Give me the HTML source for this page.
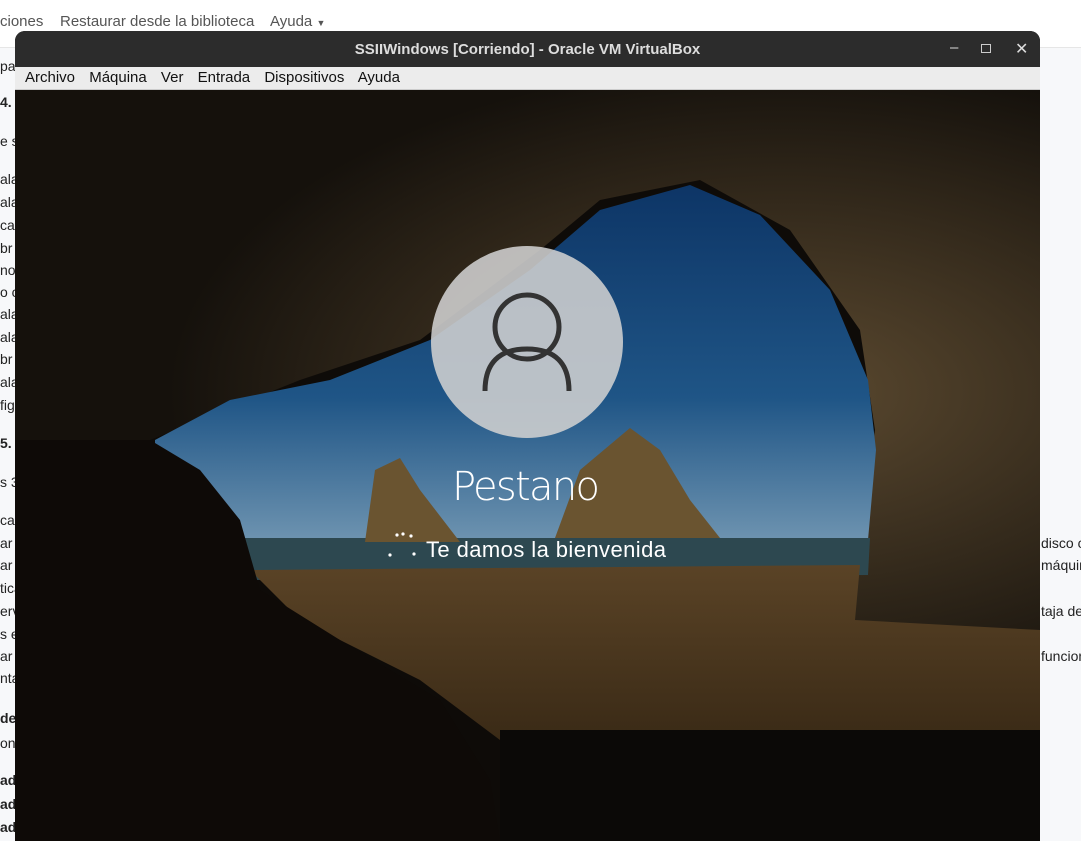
<!DOCTYPE html>
<html><head><meta charset="utf-8"><style>
*{margin:0;padding:0;box-sizing:border-box}
body{width:1081px;height:835px;overflow:hidden;background:#f7f8fa;font-family:"Liberation Sans",sans-serif;position:relative}
.top{position:absolute;left:0;top:0;width:1081px;height:48px;background:#fff;border-bottom:1px solid #e6e6e6}
.top span{position:absolute;top:13px;font-size:15px;color:#555;white-space:nowrap}
.lt{position:absolute;left:0;font-size:14px;color:#222;white-space:nowrap}
.rt{position:absolute;left:1041px;font-size:14px;color:#222;white-space:nowrap}
.win{position:absolute;left:15px;top:31px;width:1025px;height:810px;background:#000;border-radius:10px 10px 0 0;overflow:hidden}
.tb{height:36px;background:#2c2c2c;color:#ddd;font-weight:bold;font-size:15px;text-align:center;line-height:37px;position:relative}
.mb{height:23px;background:#ececec;border-bottom:1px solid #ccc;font-size:15px;color:#111;line-height:22px;padding-left:10px;white-space:nowrap}
.mb span{margin-right:10px}
</style></head><body>
<div class="top"><span style="left:0">ciones</span><span style="left:60px">Restaurar desde la biblioteca</span><span style="left:270px">Ayuda <small style="font-size:9px">▼</small></span></div>
<div class="lt" style="top:58px">pa</div>
<div class="lt" style="top:94px;font-weight:bold">4.</div>
<div class="lt" style="top:133px">e s</div>
<div class="lt" style="top:171px">ala</div><div class="lt" style="top:194px">ala</div><div class="lt" style="top:217px">car</div><div class="lt" style="top:240px">br</div><div class="lt" style="top:262px">nor</div><div class="lt" style="top:284px">o c</div><div class="lt" style="top:306px">ala</div><div class="lt" style="top:329px">ala</div><div class="lt" style="top:351px">br</div><div class="lt" style="top:374px">ala</div><div class="lt" style="top:397px">figu</div>
<div class="lt" style="top:435px;font-weight:bold">5.</div>
<div class="lt" style="top:474px">s 3</div>
<div class="lt" style="top:512px">car</div><div class="lt" style="top:535px">ar u</div><div class="lt" style="top:557px">ar</div><div class="lt" style="top:580px">tica</div><div class="lt" style="top:603px">erv</div><div class="lt" style="top:626px">s e</div><div class="lt" style="top:648px">ar u</div><div class="lt" style="top:670px">nta</div>
<div class="lt" style="top:710px;font-weight:bold">de</div>
<div class="lt" style="top:735px">ons</div>
<div class="lt" style="top:772px;font-weight:bold">ad</div><div class="lt" style="top:796px;font-weight:bold">ad</div><div class="lt" style="top:819px;font-weight:bold">ad</div>
<div class="rt" style="top:535px">disco c</div><div class="rt" style="top:557px">máquin</div><div class="rt" style="top:603px">taja de</div><div class="rt" style="top:648px">funcion</div>
<div class="win">
<div class="tb">SSIIWindows [Corriendo] - Oracle VM VirtualBox
<span style="position:absolute;left:935px;top:-2px;font-weight:normal">–</span>
<span style="position:absolute;left:966px;top:13px;width:10px;height:9px;border:1px solid #ccc"></span>
<span style="position:absolute;left:1000px;top:0;font-weight:normal;font-size:16px">✕</span></div>
<div class="mb"><span>Archivo</span> <span>Máquina</span> <span>Ver</span> <span>Entrada</span> <span>Dispositivos</span> <span>Ayuda</span></div>
<svg width="1025" height="751" viewBox="15 90 1025 751" style="display:block">
<defs>
<linearGradient id="sky" x1="0" y1="0" x2="0" y2="1"><stop offset="0" stop-color="#0d3566"/><stop offset="0.6" stop-color="#1f5586"/><stop offset="1" stop-color="#6d93b0"/></linearGradient>
<linearGradient id="sand" x1="0" y1="0" x2="0" y2="1"><stop offset="0" stop-color="#5a4326"/><stop offset="1" stop-color="#3a2a16"/></linearGradient>
<radialGradient id="rock" cx="0.75" cy="0.55" r="0.6"><stop offset="0" stop-color="#5c4a30"/><stop offset="1" stop-color="#15110c"/></radialGradient>
</defs>
<rect x="15" y="90" width="1025" height="751" fill="#0e0b08"/>
<path d="M15 90 L1040 90 L1040 640 L850 630 L860 540 L875 430 L860 330 L790 230 L700 180 L600 200 L540 250 L420 340 L300 380 L150 440 L15 440 Z" fill="url(#rock)"/>
<path d="M155 440 L230 400 L330 380 L430 340 L530 270 L600 210 L690 185 L760 215 L830 290 L868 380 L876 450 L868 540 L155 540 Z" fill="url(#sky)"/>
<path d="M155 538 L870 538 L868 575 L250 580 Z" fill="#2d4850"/>
<path d="M555 538 L580 470 L630 428 L660 450 L690 500 L720 538 Z" fill="#6a5430"/>
<path d="M365 542 L375 470 L400 458 L420 490 L460 542 Z" fill="#6a5430"/>
<path d="M250 570 L860 565 L855 620 L1040 630 L1040 730 L500 740 L420 680 L300 620 Z" fill="url(#sand)"/>
<path d="M15 440 L150 440 L200 470 L240 520 L260 590 L340 640 L440 700 L490 780 L500 841 L15 841 Z" fill="#0e0a07"/>
<rect x="500" y="730" width="540" height="111" fill="#0b0907"/>
<circle cx="527" cy="342" r="96" fill="#d0d0d0" fill-opacity="0.88"/>
<circle cx="527" cy="327" r="32" fill="none" stroke="#333" stroke-width="5"/>
<path d="M485 391 Q485 349 527 349 Q569 349 569 391" fill="none" stroke="#333" stroke-width="5"/>
<text x="526" y="500" font-family="DejaVu Sans,sans-serif" font-size="40" fill="#fff" text-anchor="middle" font-weight="200" textLength="148">Pestano</text>
<text x="426" y="557" font-family="Liberation Sans,sans-serif" font-size="22" fill="#fff" textLength="240">Te damos la bienvenida</text>
<g fill="#fff"><circle cx="397" cy="535" r="1.6"/><circle cx="403" cy="534" r="1.6"/><circle cx="411" cy="536" r="1.6"/><circle cx="390" cy="555" r="1.6"/><circle cx="414" cy="554" r="1.6"/></g>
</svg>
</div>
</body></html>
